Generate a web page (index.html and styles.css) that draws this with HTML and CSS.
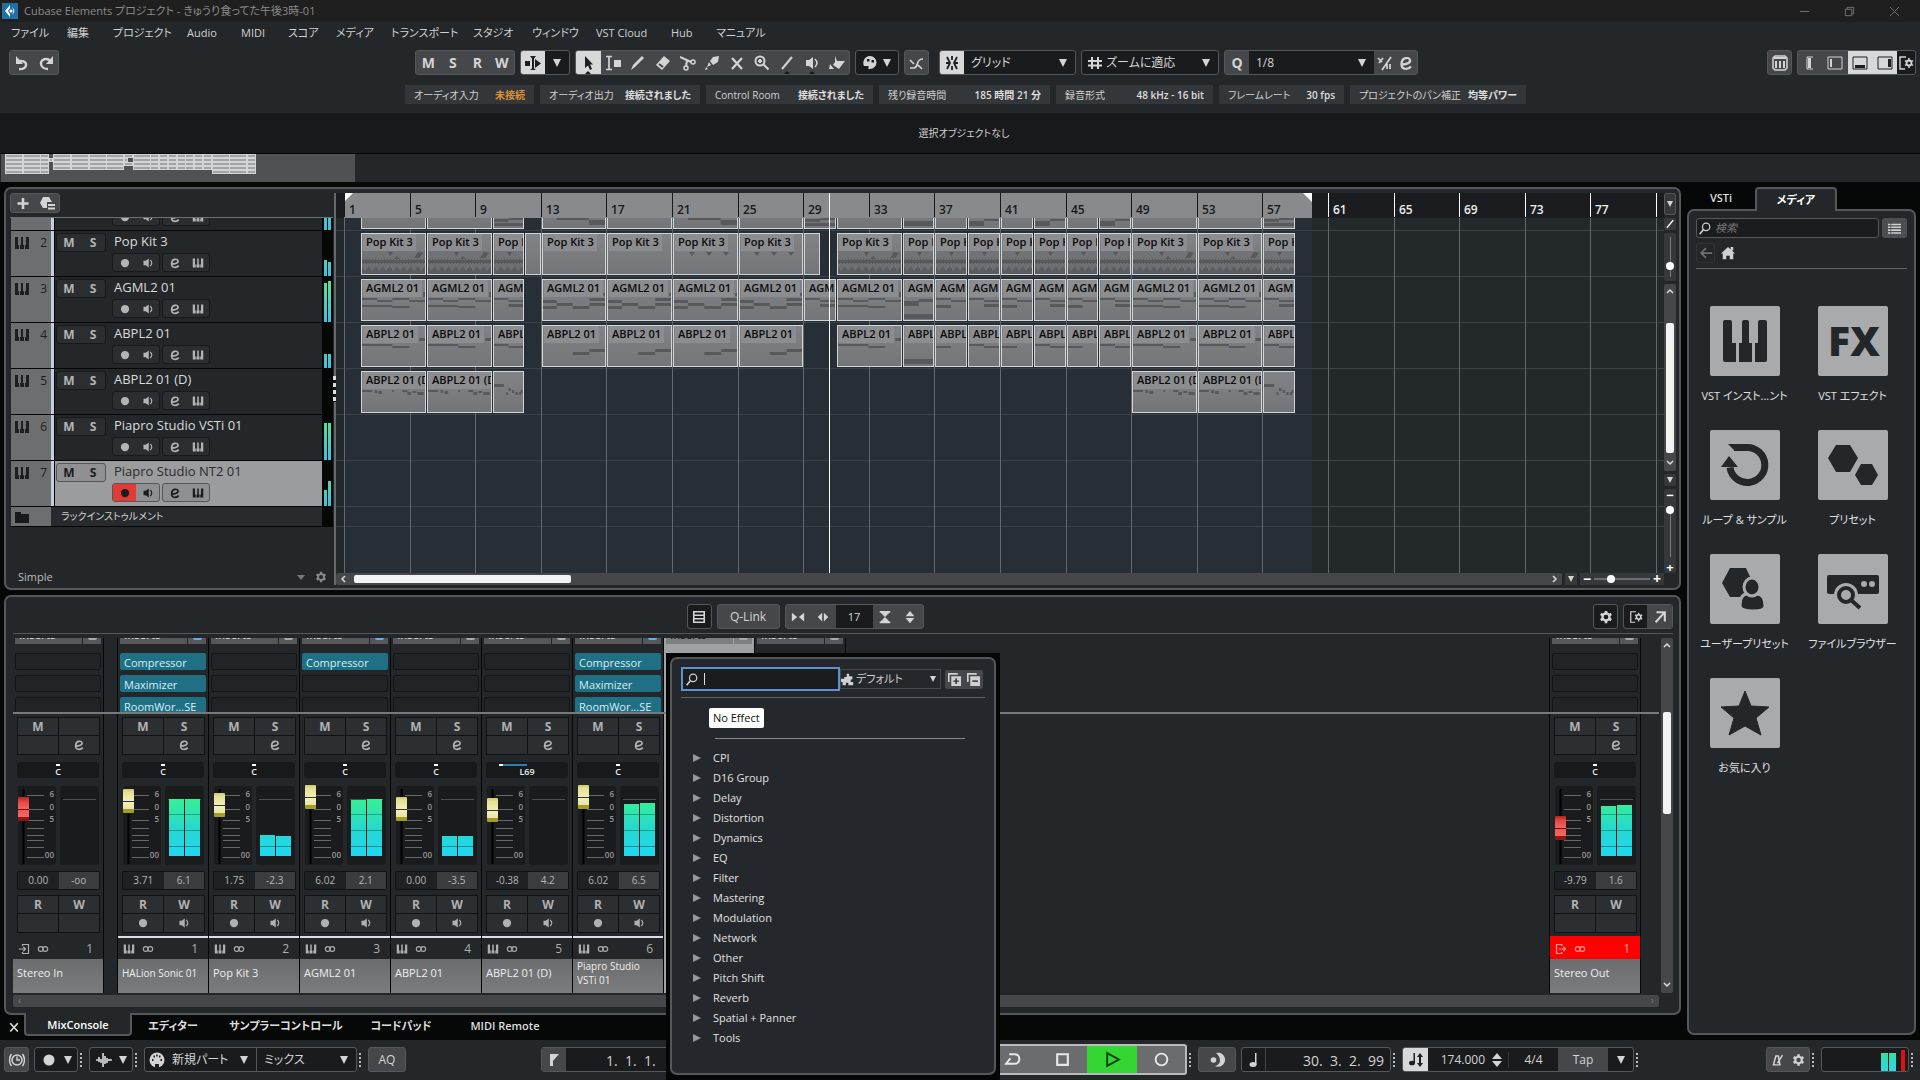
FILE: index.html
```html
<!DOCTYPE html>
<html lang="ja">
<head>
    <meta charset="utf-8">
    <meta name="viewport" content="width=device-width, initial-scale=1">
    <title>Cubase Elements プロジェクト</title>
    <link rel="stylesheet" href="styles.css">
    <script src="project.js" defer></script>
</head>
<body>
    <svg class="symbols" width="0" height="0" aria-hidden="true">
        <symbol id="undo" viewBox="0 0 16 16"><path d="M5 14c8 1 10-8 2-8H4" fill="none" stroke="currentColor" stroke-width="2.4"/><path d="M2 1v8h7z"/></symbol>
        <symbol id="redo" viewBox="0 0 16 16"><path d="M10 14c-9 0-9-10-2-10 3 0 4 1 5 3" fill="none" stroke="currentColor" stroke-width="2.4"/><path d="M15 1v8H8z"/></symbol>
        <symbol id="autoscroll" viewBox="0 0 16 16"><path d="M0 6h5v5H0zM5 1h6L9 3.500v10L11 15H5l2-1.500v-10zM10 4l6 4.500-6 4.500z"/></symbol>
        <symbol id="arrow" viewBox="0 0 16 16"><path d="M5 1v12l3-2.500 2 4.500 2-1-2-4.500h3z"/></symbol>
        <symbol id="range" viewBox="0 0 16 16"><path d="M1 1.500h6M1 14.500h6M4 2v13" fill="none" stroke="currentColor" stroke-width="1.700"/><path d="M9 5h7v7H9z"/></symbol>
        <symbol id="pencil" viewBox="0 0 16 16"><path d="M1 15l2-5 9-9 2 2-9 9z"/></symbol>
        <symbol id="eraser" viewBox="0 0 16 16"><path d="M9 1l6 5-8 9-6-5z"/><path d="M4 9l4 3" stroke="#444" stroke-width="2"/></symbol>
        <symbol id="scissors" viewBox="0 0 16 16"><path d="M0 2l11 5M7 5L6 12" fill="none" stroke="currentColor" stroke-width="2"/><circle cx="13" cy="7" r="2" fill="none" stroke="currentColor" stroke-width="1.500"/><circle cx="6" cy="13" r="2" fill="none" stroke="currentColor" stroke-width="1.500"/></symbol>
        <symbol id="glue" viewBox="0 0 16 16"><path d="M15 1l-1 6-5 3-3-4 3-4zM5 7l2 3-4 2zM2 12l2 2-3 1z"/></symbol>
        <symbol id="cross" viewBox="0 0 16 16"><path d="M3 3l10 11M13 3L3 14" stroke="currentColor" stroke-width="2.200"/></symbol>
        <symbol id="zoom" viewBox="0 0 16 16"><circle cx="6" cy="6" r="4.500" fill="none" stroke="currentColor" stroke-width="2"/><path d="M4 6h4M6 4v4M9.500 9.500l5 5" stroke="currentColor" stroke-width="2"/></symbol>
        <symbol id="line" viewBox="0 0 16 16"><path d="M3 14L13 2" stroke="currentColor" stroke-width="2"/></symbol>
        <symbol id="speaker" viewBox="0 0 16 16"><path d="M2 5h3l4-3v12l-4-3H2z"/><path d="M11 4q4 4 0 8" fill="none" stroke="currentColor" stroke-width="1.500"/></symbol>
        <symbol id="warp" viewBox="0 0 16 16"><path d="M6 1l2 5h8l-6 8-6-4 2-3zM1 9l4 5H0z"/></symbol>
        <symbol id="palette" viewBox="0 0 16 16"><path fill-rule="evenodd" d="M8 1a6.500 6.500 0 1 1 0 13H7c-2 0 1-3-1-3H2C0 8 2 1 8 1zM5 4v2.500h2.500V4zm4.500 1v2.500H12V5z"/></symbol>
        <symbol id="curve" viewBox="0 0 16 16"><path d="M1 13h4c5 0 1-9 9-9M9 10l4 4M1 5l4 4" fill="none" stroke="currentColor" stroke-width="1.700"/></symbol>
        <symbol id="snap" viewBox="0 0 16 16"><path d="M8 1v4M8 15v-4M3 2l3 6-3 6M13 2l-3 6 3 6M2 8h4M10 8h4" fill="none" stroke="currentColor" stroke-width="1.800"/></symbol>
        <symbol id="hash" viewBox="0 0 16 16"><path d="M5 2v12M11 2v12M1 6h14M1 10.500h14" stroke="currentColor" stroke-width="2"/></symbol>
        <symbol id="quant" viewBox="0 0 16 16"><path d="M1 3l4 4M6 3L2 8M14 2L5 15M10 9v5M13 9v5" fill="none" stroke="currentColor" stroke-width="1.700"/></symbol>
        <symbol id="edit" viewBox="0 0 16 16"><path d="M3 9.500c5 0 10-1.500 9-4.500-1-3-8-3-8.500 3.500C3 15 10 15 13 11.500" fill="none" stroke="currentColor" stroke-width="2.200"/></symbol>
        <symbol id="search" viewBox="0 0 16 16"><circle cx="10" cy="6" r="4.500" fill="none" stroke="currentColor" stroke-width="1.500"/><path d="M7 9l-5 6" stroke="currentColor" stroke-width="2"/></symbol>
        <symbol id="piano" viewBox="0 0 16 16"><path d="M1 2h3v8h1v4H1zM7 2h2v8h1v4H6v-4h1zM12 2h3v12h-4v-4h1z"/></symbol>
        <symbol id="keys" viewBox="0 0 16 16"><path d="M3 1h10l2 2v10l-2 2H3l-2-2V3z" fill="none" stroke="currentColor" stroke-width="1.500"/><path d="M2 2h12v2H2zM3 6h2v7H3zM7 6h2v7H7zM11 6h2v7h-2z"/></symbol>
        <symbol id="gear" viewBox="0 0 16 16"><circle cx="8" cy="8" r="4" fill="none" stroke="currentColor" stroke-width="2.600"/><path d="M8 1v3M8 12v3M2 4.500l2.500 1.500M11.500 10l2.500 1.500M14 4.500L11.500 6M4.500 10L2 11.500" stroke="currentColor" stroke-width="3"/></symbol>
        <symbol id="zonegear" viewBox="0 0 16 16"><path d="M8 2H2v12h5" fill="none" stroke="currentColor" stroke-width="1.400"/><circle cx="11" cy="8" r="2.500" fill="none" stroke="currentColor" stroke-width="1.800"/><path d="M11 3v3M11 10v3M7 5.500l2 1.500M13 9l2 1.500M15 5.500L13 7M7 10.500L9 9" stroke="currentColor" stroke-width="1.500"/></symbol>
        <symbol id="zone-a" viewBox="0 0 16 16"><path d="M11 2H5v12h6" fill="none" stroke="currentColor"/><path d="M6 3h3v10H6z"/></symbol>
        <symbol id="zone-b" viewBox="0 0 16 16"><path d="M1 2h14v12H1z" fill="none" stroke="currentColor"/><path d="M3 4h2v8H3z"/></symbol>
        <symbol id="zone-c" viewBox="0 0 16 16"><path d="M1 2h14v12H1z" fill="none" stroke="currentColor"/><path d="M3 10h10v3H3z"/></symbol>
        <symbol id="zone-d" viewBox="0 0 16 16"><path d="M1 2h14v12H1z" fill="none" stroke="currentColor"/><path d="M11 4h3v8h-3z"/></symbol>
        <symbol id="plus" viewBox="0 0 16 16"><path d="M8 3v11M2.500 8.500h11" stroke="currentColor" stroke-width="2.600"/></symbol>
        <symbol id="preset" viewBox="0 0 16 16"><path d="M4 2h6l3 5H8v6H4L1 8zM9 9h7v2H9zM9 12.500h7v2H9z"/></symbol>
        <symbol id="folder" viewBox="0 0 16 16"><path d="M1 3h6v2h8v9H1z"/></symbol>
        <symbol id="list" viewBox="0 0 16 16"><path d="M0 2h3v2H0zM4 2h12v2H4zM0 5.500h3v2H0zM4 5.500h12v2H4zM0 9h3v2H0zM4 9h12v2H4zM0 12.500h3v2H0zM4 12.500h12v2H4z"/></symbol>
        <symbol id="back" viewBox="0 0 16 16"><path d="M15 8H3M8 2.500L2.500 8 8 13.500" fill="none" stroke="currentColor" stroke-width="2"/></symbol>
        <symbol id="home" viewBox="0 0 16 16"><path d="M8 1l8 7.500h-2V15h-4v-4H6v4H2V8.500H0zM11 1h3v4h-3z"/></symbol>
        <symbol id="rows" viewBox="0 0 16 16"><path d="M2 2h12v12H2zM2 6h12M2 10h12" fill="none" stroke="currentColor" stroke-width="1.800"/></symbol>
        <symbol id="narrow" viewBox="0 0 16 16"><path d="M1 3l6 5-6 5zM15 3L9 8l6 5z"/></symbol>
        <symbol id="widen" viewBox="0 0 16 16"><path d="M7 3L2 8l5 5zM9 3l5 5-5 5z"/></symbol>
        <symbol id="shrink" viewBox="0 0 16 16"><path d="M2 1h12v2H2zM3 3h10L8 8zM8 8l5 5H3zM2 13h12v2H2z"/></symbol>
        <symbol id="grow" viewBox="0 0 16 16"><path d="M8 1l5 6H3zM8 15l5-6H3z"/></symbol>
        <symbol id="popout" viewBox="0 0 16 16"><path d="M4 2.500h9.500V13M13 3L3 14" fill="none" stroke="currentColor" stroke-width="2.400"/></symbol>
        <symbol id="link" viewBox="0 0 16 16"><circle cx="5" cy="8" r="3.200" fill="none" stroke="currentColor" stroke-width="1.500"/><circle cx="11" cy="8" r="3.200" fill="none" stroke="currentColor" stroke-width="1.500"/></symbol>
        <symbol id="input" viewBox="0 0 16 16"><path d="M6 4V2h8v12H6v-2M1 8h8M7 5l3 3-3 3" fill="none" stroke="currentColor" stroke-width="1.600"/></symbol>
        <symbol id="output" viewBox="0 0 16 16"><path d="M9 4V2H2v12h7v-2M5 8h9M11 5l3 3-3 3" fill="none" stroke="currentColor" stroke-width="1.600"/></symbol>
        <symbol id="dot" viewBox="0 0 16 16"><circle cx="8" cy="8" r="5.500"/></symbol>
        <symbol id="clock" viewBox="0 0 16 16"><circle cx="8" cy="8" r="5" fill="none" stroke="currentColor" stroke-width="1.500"/><path d="M8 4.500V8h3M2.500 2Q-1.500 8 2.500 14M13.500 2q4 6 0 12" fill="none" stroke="currentColor" stroke-width="1.400"/></symbol>
        <symbol id="wave" viewBox="0 0 16 16"><path d="M0 8h3M3 5v5M5 7v4M7 1v14M9 4v8M11 6v5M13 7v2M13 8h3" stroke="currentColor" stroke-width="1.700"/></symbol>
        <symbol id="midi" viewBox="0 0 16 16"><circle cx="8" cy="8" r="7.500"/><path d="M3 7h1.500v2H3zM11.500 7H13v2h-1.500zM4.500 3.500H6v2H4.500zM10 3.500h1.500v2H10zM7.200 2.500h1.500v2H7.200zM6 12h4v4H6z" fill="#1b1d1f"/></symbol>
        <symbol id="flag" viewBox="0 0 16 16"><path d="M4 2h9L7 9v5H4z"/></symbol>
        <symbol id="loop" viewBox="0 0 16 16"><path d="M5 3h5c6 0 6 9 0 9H2l4-5" fill="none" stroke="currentColor" stroke-width="1.800"/></symbol>
        <symbol id="stop" viewBox="0 0 16 16"><path d="M3 3h10v10H3z" fill="none" stroke="currentColor" stroke-width="2"/></symbol>
        <symbol id="play" viewBox="0 0 16 16"><path d="M3 2l11 6-11 6z" fill="none" stroke="currentColor" stroke-width="1.800"/></symbol>
        <symbol id="record" viewBox="0 0 16 16"><circle cx="8" cy="8" r="5.500" fill="none" stroke="currentColor" stroke-width="1.800"/></symbol>
        <symbol id="click" viewBox="0 0 16 16"><circle cx="4.500" cy="8" r="2.800"/><path d="M7 1a7 7 0 1 1-1 13c6-1 7-8 1-13z"/></symbol>
        <symbol id="note" viewBox="0 0 16 16"><ellipse cx="7" cy="12.500" rx="3.500" ry="2.500"/><path d="M9 1h1.500v12H9z"/></symbol>
        <symbol id="tempo" viewBox="0 0 16 16"><ellipse cx="4" cy="11" rx="3" ry="2.300"/><path d="M5.500 1H7v10H5.500zM12 1l3 4h-2v6h2l-3 4-3-4h2V5H9z"/></symbol>
        <symbol id="metronome" viewBox="0 0 16 16"><path d="M6 3h3l2 11H3zM8 12l6-10" fill="none" stroke="currentColor" stroke-width="1.800"/></symbol>
        <symbol id="plugin" viewBox="0 0 16 16"><path d="M7 1h3v3h4v4h-2v3h3v4H9v-3H6v3H2v-4H0V7h4V5h3z"/></symbol>
        <symbol id="expand" viewBox="0 0 16 16"><path d="M1 11V1h11" fill="none" stroke="currentColor" stroke-width="2"/><path d="M4 4h12v12H4z"/><path d="M10 6.500v7M6.500 10h7" stroke="#333" stroke-width="1.800"/></symbol>
        <symbol id="collapse" viewBox="0 0 16 16"><path d="M1 11V1h11" fill="none" stroke="currentColor" stroke-width="2"/><path d="M4 4h12v12H4z"/><path d="M6.500 10h7" stroke="#333" stroke-width="1.800"/></symbol>
    </svg>

    <header class="titlebar">
        <svg class="logo" viewBox="0 0 16 16"><path d="M0 0h16v16H0z" fill="#1f6fa8"/><path d="M8 2L3 8l5 6v-3L6 8l2-3z" fill="#fff"/><path d="M10 4q5 4 0 8 2-4 0-8z" fill="#fff" opacity=".7"/><circle cx="9" cy="8" r="1.500" fill="#fff"/></svg>
        <h1>Cubase Elements プロジェクト - きゅうり食ってた午後3時-01</h1>
        <div class="window-buttons">
            <button aria-label="最小化"><svg viewBox="0 0 12 12"><path d="M1 6h10"/></svg></button>
            <button aria-label="元に戻す"><svg viewBox="0 0 12 12"><path d="M1.500 3.500h7v7h-7zM3.500 3.500v-2h7v7h-2"/></svg></button>
            <button aria-label="閉じる"><svg viewBox="0 0 12 12"><path d="M1 1l10 10M11 1L1 11"/></svg></button>
        </div>
    </header>

    <nav class="menubar">
        <a href="#">ファイル</a><a href="#">編集</a><a href="#">プロジェクト</a><a href="#">Audio</a><a href="#">MIDI</a><a href="#">スコア</a><a href="#">メディア</a><a href="#">トランスポート</a><a href="#">スタジオ</a><a href="#">ウィンドウ</a><a href="#">VST Cloud</a><a href="#">Hub</a><a href="#">マニュアル</a>
    </nav>

    <section class="toolbar">
        <div class="toolbar-left">
            <div class="group">
                <button class="tool" aria-label="元に戻す"><svg class="icon"><use href="#undo"/></svg></button>
                <button class="tool" aria-label="やり直す"><svg class="icon"><use href="#redo"/></svg></button>
            </div>
        </div>
        <div class="toolbar-center">
            <div class="group letters">
                <button class="tool">M</button><button class="tool">S</button><button class="tool">R</button><button class="tool">W</button>
            </div>
            <div class="group dark autoscroll">
                <button class="tool on" aria-label="オートスクロール"><svg class="icon"><use href="#autoscroll"/></svg></button>
                <button class="tool" aria-label="オートスクロール設定"><i class="caret"></i></button>
            </div>
            <div class="group" id="tools"></div>
            <div class="group dark color-tool">
                <button class="tool" aria-label="カラー"><svg class="icon"><use href="#palette"/></svg></button>
                <i class="caret"></i>
            </div>
            <div class="group">
                <button class="tool" aria-label="ゼロクロス"><svg class="icon"><use href="#curve"/></svg></button>
            </div>
            <div class="group dark snap">
                <button class="tool on" aria-label="スナップ"><svg class="icon"><use href="#snap"/></svg></button>
                <div class="dropdown"><select aria-label="スナップタイプ"><option>グリッド</option></select></div>
            </div>
            <div class="group dark grid-type">
                <svg class="icon"><use href="#hash"/></svg>
                <div class="dropdown"><select aria-label="グリッドの種類"><option>ズームに適応</option></select></div>
            </div>
            <div class="group quantize">
                <button class="tool q">Q</button>
                <div class="dropdown"><select aria-label="クオンタイズ"><option>1/8</option></select></div>
                <button class="tool small" aria-label="反復クオンタイズ"><svg class="icon"><use href="#quant"/></svg></button>
                <button class="tool small" aria-label="クオンタイズ設定"><svg class="icon"><use href="#edit"/></svg></button>
            </div>
        </div>
        <div class="toolbar-right">
            <div class="group"><button class="tool" aria-label="キーボード"><svg class="icon"><use href="#keys"/></svg></button></div>
            <div class="group zones">
                <button class="tool" aria-label="インスペクター"><svg class="icon"><use href="#zone-a"/></svg></button>
                <button class="tool" aria-label="左ゾーン"><svg class="icon"><use href="#zone-b"/></svg></button>
                <button class="tool on" aria-label="下ゾーン"><svg class="icon"><use href="#zone-c"/></svg></button>
                <button class="tool on" aria-label="右ゾーン"><svg class="icon"><use href="#zone-d"/></svg></button>
                <button class="tool last" aria-label="レイアウト設定"><svg class="icon"><use href="#zonegear"/></svg></button>
            </div>
        </div>
    </section>

    <section class="status-line">
        <div><span>オーディオ入力</span><b class="warn">未接続</b></div>
        <div><span>オーディオ出力</span><b>接続されました</b></div>
        <div><span>Control Room</span><b>接続されました</b></div>
        <div><span>残り録音時間</span><b>185 時間 21 分</b></div>
        <div><span>録音形式</span><b>48 kHz - 16 bit</b></div>
        <div><span>フレームレート</span><b>30 fps</b></div>
        <div><span>プロジェクトのパン補正</span><b>均等パワー</b></div>
    </section>

    <section class="info-line">選択オブジェクトなし</section>
    <section class="overview"><div class="overview-range"><svg id="overview-map"></svg></div></section>

    <main class="workspace">
        <div class="left-column">
            <section class="panel project">
                <div class="track-list">
                    <div class="track-head">
                        <div class="group">
                            <button class="tool" aria-label="トラックを追加"><svg class="icon"><use href="#plus"/></svg></button>
                            <button class="tool" aria-label="トラックプリセット"><svg class="icon"><use href="#preset"/></svg></button>
                        </div>
                    </div>
                    <div class="tracks" id="tracks"></div>
                    <div class="track-foot"><span>Simple</span><i class="caret"></i><svg class="icon"><use href="#gear"/></svg></div>
                </div>
                <div class="splitter"><i></i></div>
                <div class="timeline">
                    <div class="ruler" id="ruler"></div>
                    <div class="lanes" id="lanes"></div>
                    <div class="playhead"></div>
                    <div class="hscroll-row">
                        <div class="hscroll"><svg class="chev"><path d="M7 3L4 6l3 3"/></svg><i class="thumb"></i><svg class="chev end"><path d="M4 3l3 3-3 3"/></svg></div>
                        <button class="mini" aria-label="表示倍率プリセット"><i class="caret"></i></button>
                        <div class="zoomer"><b>−</b><input type="range" aria-label="横ズーム" value="28"><b>+</b></div>
                    </div>
                </div>
                <div class="vbar">
                    <button class="vbtn tall" aria-label="ルーラー設定"><i class="caret"></i></button>
                    <button class="vbtn" aria-label="波形"><svg class="icon"><use href="#line"/></svg></button>
                    <div class="vslide wave"><i class="rail"></i><i class="knob"></i></div>
                    <div class="vscroll"><svg class="chev"><path d="M3 7l3-3 3 3"/></svg><i class="thumb"></i><svg class="chev"><path d="M3 4l3 3 3-3"/></svg></div>
                    <button class="vbtn" aria-label="縦ズームプリセット"><i class="caret"></i></button>
                    <div class="vslide size"><b>−</b><i class="rail"></i><i class="knob"></i><b>+</b></div>
                </div>
            </section>

            <section class="mixer-zone">
                <div class="panel mixer">
                    <div class="mixer-bar">
                        <div class="mixer-tools">
                            <div class="group dark"><button class="tool" aria-label="表示チャンネル"><svg class="icon"><use href="#rows"/></svg></button></div>
                            <div class="group"><button class="tool qlink">Q-Link</button></div>
                            <div class="group">
                                <button class="tool" aria-label="幅を縮小"><svg class="icon"><use href="#narrow"/></svg></button>
                                <button class="tool" aria-label="幅を拡大"><svg class="icon"><use href="#widen"/></svg></button>
                                <span class="count">17</span>
                                <button class="tool" aria-label="高さを縮小"><svg class="icon"><use href="#shrink"/></svg></button>
                                <button class="tool" aria-label="高さを拡大"><svg class="icon"><use href="#grow"/></svg></button>
                            </div>
                        </div>
                        <div class="mixer-right">
                            <div class="group dark"><button class="tool" aria-label="設定"><svg class="icon"><use href="#gear"/></svg></button></div>
                            <div class="group dark"><button class="tool" aria-label="ゾーン設定"><svg class="icon"><use href="#zonegear"/></svg></button><button class="tool mid" aria-label="別ウィンドウ"><svg class="icon"><use href="#popout"/></svg></button></div>
                        </div>
                    </div>
                    <div class="mixer-body">
                        <div class="console">
                            <div class="racks" id="racks"></div>
                            <div class="strips" id="strips"></div>
                            <div class="console-scroll"><span>‹</span><span>›</span></div>
                        </div>
                        <div class="vscroll"><svg class="chev"><path d="M3 7l3-3 3 3"/></svg><i class="thumb"></i><svg class="chev"><path d="M3 4l3 3 3-3"/></svg></div>
                    </div>
                </div>
                <nav class="zone-tabs">
                    <button class="close" aria-label="閉じる"><svg class="icon"><use href="#cross"/></svg></button>
                    <button class="tab active">MixConsole</button>
                    <button class="tab">エディター</button>
                    <button class="tab">サンプラーコントロール</button>
                    <button class="tab wide">コードパッド</button>
                    <button class="tab narrow">MIDI Remote</button>
                </nav>
            </section>
        </div>

        <aside class="media">
            <nav class="media-tabs"><button class="tab">VSTi</button><button class="tab active">メディア</button></nav>
            <div class="panel media-panel">
                <div class="media-search">
                    <label><svg class="icon"><use href="#search"/></svg><input type="text" placeholder="検索" aria-label="検索"></label>
                    <button aria-label="表示"><svg class="icon"><use href="#list"/></svg></button>
                </div>
                <div class="media-path">
                    <button class="back" aria-label="戻る"><svg class="icon"><use href="#back"/></svg></button>
                    <button aria-label="ホーム"><svg class="icon"><use href="#home"/></svg></button>
                </div>
                <div class="tiles">
                    <a href="#"><svg viewBox="0 0 70 70"><path d="M13 16q0-2 2-2h5q2 0 2 2v21h4v19H15q-2 0-2-2zM32 16q0-2 2-2h3q2 0 2 2v21h3v19H29V37h3zM48 16q0-2 2-2h5q2 0 2 2v38q0 2-2 2H45V37h3z"/></svg><span>VST インスト...ント</span></a>
                    <a href="#"><svg viewBox="0 0 70 70"><text x="36" y="50" text-anchor="middle">FX</text></svg><span>VST エフェクト</span></a>
                    <a href="#"><svg viewBox="0 0 70 70"><path d="M24 17.500h13a17.500 17.500 0 1 1-17 20" fill="none" stroke="#23272a" stroke-width="7"/><path d="M18 14h12v7h-5zM11 37l8-11 9 11z"/></svg><span>ループ &amp; サンプル</span></a>
                    <a href="#"><svg viewBox="0 0 70 70"><path d="M10 28l8-13h14l8 13-8 14H18zM37 45l6-11h11l6 11-6 10H43z"/></svg><span>プリセット</span></a>
                    <a href="#"><svg viewBox="0 0 70 70"><path d="M12 29l8-15h16l7 15-7 14H20z"/><g stroke="#a8aaab" stroke-width="3"><path d="M30 52q0-12 7-12h10q8 0 8 12 0 5-12 5t-13-5z"/><ellipse cx="42" cy="33" rx="8" ry="9"/></g></svg><span>ユーザープリセット</span></a>
                    <a href="#"><svg viewBox="0 0 70 70"><rect x="9" y="21" width="52" height="19" rx="2"/><circle cx="46" cy="30" r="3" fill="#a8aaab"/><circle cx="54" cy="30" r="3" fill="#a8aaab"/><circle cx="28" cy="41" r="12" fill="#a8aaab"/><circle cx="28" cy="41" r="7" fill="none" stroke="#23272a" stroke-width="4"/><path d="M33 46l9 8" stroke="#23272a" stroke-width="4"/></svg><span>ファイルブラウザー</span></a>
                    <a href="#"><svg viewBox="0 0 70 70"><path d="M35 13l6 15 18 1-13 11 5 17-16-9-16 9 5-17L11 29l18-1z" stroke="#23272a" stroke-linejoin="round"/></svg><span>お気に入り</span></a>
                </div>
            </div>
        </aside>
    </main>

    <footer class="transport">
        <div class="transport-left">
            <div class="group"><button class="tool" aria-label="遅延補正"><svg class="icon"><use href="#clock"/></svg></button></div>
            <div class="group dark pair"><svg class="icon"><use href="#dot"/></svg><i class="caret"></i></div><i class="grip"></i>
            <div class="group dark pair"><svg class="icon"><use href="#wave"/></svg><i class="caret"></i></div><i class="grip"></i>
            <div class="group dark midi-modes">
                <svg class="icon"><use href="#midi"/></svg>
                <div class="dropdown"><select aria-label="MIDI 録音モード"><option>新規パート</option></select></div>
                <div class="dropdown mix"><select aria-label="サイクル録音モード"><option>ミックス</option></select></div>
            </div><i class="grip"></i>
            <div class="group"><button class="tool aq">AQ</button></div>
        </div>
        <div class="transport-main">
            <div class="group dark locator"><button class="tool mid" aria-label="左ロケーター"><svg class="icon"><use href="#flag"/></svg></button><span class="time">1.&nbsp; 1.&nbsp; 1.</span></div>
            <div class="play-controls">
                <button aria-label="サイクル"><svg class="icon"><use href="#loop"/></svg></button>
                <button aria-label="停止"><svg class="icon"><use href="#stop"/></svg></button>
                <button class="playing" aria-label="再生"><svg class="icon"><use href="#play"/></svg></button>
                <button aria-label="録音"><svg class="icon"><use href="#record"/></svg></button>
            </div><i class="grip"></i>
            <div class="group preroll"><button class="tool" aria-label="プリロール"><svg class="icon"><use href="#click"/></svg></button></div>
            <div class="group dark position"><button class="tool" aria-label="時間形式"><svg class="icon"><use href="#note"/></svg></button><span class="time">30.&nbsp; 3.&nbsp; 2.&nbsp; 99</span></div><i class="grip"></i>
            <div class="group dark tempo"><button class="tool on" aria-label="テンポトラック"><svg class="icon"><use href="#tempo"/></svg></button><span class="bpm">174.000</span><svg class="icon"><use href="#grow"/></svg><span class="sig">4/4</span><button class="tool tap">Tap</button><button class="tool" aria-label="タップ設定"><i class="caret"></i></button></div><i class="grip"></i>
        </div>
        <div class="transport-right">
            <div class="group metro"><button class="tool" aria-label="メトロノーム"><svg class="icon"><use href="#metronome"/></svg></button><button class="tool" aria-label="メトロノーム設定"><svg class="icon"><use href="#gear"/></svg></button></div><i class="grip"></i>
            <div class="group dark levels"><i class="lv"></i><i class="lv"></i><i class="clip-led"></i></div><i class="grip"></i>
        </div>
    </footer>

    <!-- insert slot plug-in selector -->
    <section class="selector">
        <div class="selector-box">
            <div class="selector-bar">
                <label class="selector-search"><svg class="icon"><use href="#search"/></svg><i class="text-caret"></i><input type="text" aria-label="プラグインを検索"></label>
                <div class="collection"><svg class="icon"><use href="#plugin"/></svg><div class="dropdown"><select aria-label="コレクション"><option>デフォルト</option></select></div></div>
                <div class="tree-buttons"><button aria-label="すべて展開"><svg class="icon"><use href="#expand"/></svg></button><button aria-label="すべて折りたたむ"><svg class="icon"><use href="#collapse"/></svg></button></div>
            </div>
            <button class="no-effect">No Effect</button>
            <ul class="effects" id="effects"></ul>
        </div>
    </section>
</body>
</html>
```
FILE: styles.css
```css
:root {
    --bg: #23272a;
    --line: #55585a;
    --btn: #45474a;
    --dark: #191b1d;
    --light: #d4d4d4;
    font-family: "Open Sans", "Noto Sans CJK JP", sans-serif;
    font-size: 11px;
    font-feature-settings: "palt";
}

* {
    box-sizing: border-box;
}

body {
    margin: 0;
    height: 100vh;
    min-height: 1000px;
    display: flex;
    flex-direction: column;
    background: #060808;
    color: #cfd0d0;
    line-height: 16px;
    white-space: nowrap;
    overflow: hidden;
    position: relative;
}

button, input, select {
    font: inherit;
    font-feature-settings: inherit;
    color: inherit;
    background: none;
    border: 0;
    padding: 0;
    margin: 0;
    outline: 0;
}

a {
    color: inherit;
    text-decoration: none;
}

.symbols {
    position: absolute;
}

.icon {
    width: 16px;
    height: 16px;
    fill: currentColor;
    flex: none;
    display: block;
}

.caret {
    flex: none;
    border: 4px solid transparent;
    border-top: 8px solid #d4d4d4;
    border-bottom: 0;
}

/* shared controls */
.group {
    display: flex;
    align-items: stretch;
    height: 25px;
    border: 1px solid var(--line);
    border-radius: 3px;
    background: var(--btn);
    color: var(--light);
    overflow: hidden;
    flex: none;
}

.group.dark {
    background: var(--dark);
}

.tool {
    flex: 1;
    min-width: 23px;
    display: flex;
    align-items: center;
    justify-content: center;
    position: relative;
}

.tool.on {
    background: #d8d8d8;
    color: #1c1e20;
}

.tool.mid {
    background: var(--btn);
}

.dropdown {
    position: relative;
    flex: 1;
    display: flex;
}

.dropdown select {
    appearance: none;
    width: 100%;
    padding-left: 7px;
}

.dropdown::after {
    content: "";
    position: absolute;
    right: 8px;
    top: 8px;
    border: 4px solid transparent;
    border-top: 8px solid #d4d4d4;
    border-bottom: 0;
    pointer-events: none;
}

.panel {
    border: 2px solid var(--line);
    border-radius: 7px;
    background: var(--bg);
}

/* title and menu */
.titlebar {
    height: 22px;
    background: #1f1f1f;
    display: flex;
    align-items: center;
    padding: 0 3px 0 2px;
    flex: none;
}

.logo {
    width: 16px;
    height: 16px;
}

.titlebar h1 {
    flex: 1;
    margin: 0 0 0 6px;
    font-size: 11px;
    font-weight: normal;
    color: #8b8b8b;
}

.window-buttons {
    display: flex;
}

.window-buttons button {
    width: 45px;
    display: flex;
    justify-content: center;
}

.window-buttons svg {
    width: 11px;
    height: 11px;
    fill: none;
    stroke: #777;
}

.menubar {
    height: 28px;
    flex: none;
    display: grid;
    grid-template-columns: 56px 46px 74px 54px 47px 48px 55px 82px 59px 64px 75px 45px auto;
    padding: 3px 0 0 11px;
    background: var(--bg);
}

/* toolbar */
.toolbar {
    flex: none;
    display: flex;
    justify-content: space-between;
    height: 35px;
    padding: 0 4px 0 9px;
    background: var(--bg);
}

.toolbar-left {
    width: 57px;
    display: flex;
}

.toolbar-left .group {
    width: 50px;
}

.toolbar-center, .toolbar-right {
    display: flex;
    gap: 5px;
}

.letters, .q {
    font-weight: bold;
    font-size: 14px;
}

.letters {
    width: 100px;
}

.autoscroll {
    width: 50px;
}

#tools {
    width: 275px;
}

#tools .menu::after {
    content: "";
    position: absolute;
    bottom: 0;
    border: 3px solid transparent;
    border-bottom-color: #15171a;
    border-top: 0;
}

.color-tool {
    width: 44px;
    align-items: center;
    padding-right: 7px;
}

.snap {
    width: 137px;
    margin-left: 5px;
    font-size: 12px;
}

.snap .tool {
    flex: 0 0 24px;
}

.grid-type {
    width: 138px;
    align-items: center;
    padding-left: 5px;
    font-size: 12px;
}

.grid-type select {
    padding-left: 3px;
}

.grid-type .dropdown::after {
    top: 4px;
}

.quantize {
    width: 194px;
    font-size: 12px;
}

.quantize .q {
    flex: 0 0 24px;
}

.quantize .dropdown {
    background: var(--dark);
    flex: 0 0 125px;
}

.quantize .small {
    min-width: 0;
}

.zones {
    width: 119px;
}

.zones .last {
    flex: 0 0 18px;
    min-width: 0;
    background: var(--dark);
}

.toolbar-right .group:first-child {
    width: 25px;
}

/* status */
.status-line {
    flex: none;
    height: 28px;
    display: grid;
    grid-template-columns: 129px 160px 167px 171px 157px 125px 176px;
    justify-content: center;
    gap: 6px;
    padding-left: 11px;
    background: var(--bg);
}

.status-line div {
    height: 19px;
    display: flex;
    justify-content: space-between;
    align-items: center;
    padding: 0 9px;
    background: #34373a;
    font-size: 10px;
}

.status-line b {
    font-weight: 600;
    color: #dedede;
}

.status-line .warn {
    color: #dc9038;
}

.info-line {
    flex: none;
    height: 41px;
    background: #17191b;
    border-bottom: 1px solid #050505;
    display: flex;
    align-items: center;
    justify-content: center;
    font-size: 10px;
    padding-left: 8px;
}

.overview {
    flex: none;
    height: 28px;
    background: var(--bg);
    padding-left: 1px;
}

.overview-range {
    width: 354px;
    height: 28px;
    background: #505153;
}

.overview-range svg {
    display: block;
    width: 354px;
    height: 28px;
}

/* workspace */
.workspace {
    flex: 1;
    min-height: 0;
    display: grid;
    grid-template-columns: minmax(0, 1fr) 229px;
    gap: 6px;
    padding: 5px 4px;
}

.left-column {
    display: flex;
    flex-direction: column;
    gap: 5px;
    min-height: 0;
}

.project {
    flex: 1;
    min-height: 0;
    display: flex;
    padding: 4px 3px 3px 4px;
}

.track-list {
    width: 323px;
    flex: none;
    display: flex;
    flex-direction: column;
}

.track-head {
    height: 25px;
    border-bottom: 1px solid #6d7072;
}

.track-head .group {
    width: 50px;
    height: 20px;
}

.tracks {
    flex: 1;
    min-height: 0;
    overflow: hidden;
    padding-left: 1px;
}

.track {
    height: 46px;
    display: grid;
    grid-template-columns: 40px 3px 1fr 11px;
    border-bottom: 1px solid #060606;
}

.track:first-child {
    margin-top: -33px;
}

.track-id {
    background: #6d6e70;
    color: #1d1f21;
    display: flex;
    justify-content: space-between;
    align-items: flex-start;
    padding: 4px 4px 0 3px;
    font-size: 12px;
}

.track-color {
    background: #c3cfdd;
}

.track-body {
    border-left: 1px solid #060606;
    display: grid;
    grid-template-columns: 56px 1fr;
    grid-template-rows: 19px 19px;
    gap: 1px 0;
    padding: 2px 0 0 1px;
}

.ms, .pair-box {
    display: flex;
    align-items: center;
    border: 1px solid #17191b;
    border-radius: 3px;
    background: #2b2e31;
    color: #b3b4b4;
    font-weight: bold;
    font-size: 12px;
    height: 19px;
}

.ms {
    width: 50px;
}

.ms button {
    flex: 1;
}

.track-name {
    font-size: 13px;
    color: #dadbdb;
    padding-left: 2px;
    line-height: 17px;
}

.track-buttons {
    grid-column: 2;
    display: flex;
    gap: 2px;
}

.pair-box {
    width: 48px;
}

.pair-box button {
    height: 17px;
    flex: 1;
    display: flex;
    align-items: center;
    justify-content: center;
}

.pair-box .icon {
    width: 12px;
    height: 12px;
}

.track.selected .track-body {
    background: #9b9c9e;
    color: #1a1a1a;
}

.selected .ms, .selected .pair-box {
    background: #8f9092;
    border-color: #55575a;
    color: #1a1c1e;
}

.selected .track-name {
    color: #2b2b2b;
}

.selected .armed {
    background: #e23a34;
}

.track-meter {
    background: #060808;
    display: flex;
    align-items: flex-end;
    justify-content: center;
    gap: 1px;
}

.track-meter i {
    width: 3px;
    background: linear-gradient(to top, #45bddd, #5adf95 40px);
}

.track-folder {
    height: 20px;
    display: flex;
    border-bottom: 1px solid #060606;
    padding-right: 11px;
    background: linear-gradient(to left, #060808 11px, #282b2e 11px);
    font-size: 10px;
    line-height: 19px;
}

.track-folder div {
    width: 40px;
    background: #6d6e70;
    color: #17191b;
    padding: 2px 3px;
    margin-right: 10px;
}

.track-foot {
    height: 16px;
    display: flex;
    align-items: center;
    padding: 0 6px 0 8px;
    gap: 10px;
    color: #bbb;
}

.track-foot span {
    flex: 1;
}

.track-foot .caret {
    border-top: 5px solid #777;
}

.track-foot .icon {
    width: 12px;
    height: 12px;
    color: #888;
}

.splitter {
    width: 3px;
    border-right: 2px solid #66696b;
    display: flex;
    align-items: center;
}

.splitter i {
    width: 3px;
    height: 26px;
    background: repeating-linear-gradient(#ddd 0 4px, #111 4px 7px);
    flex: none;
}

/* timeline */
.timeline {
    flex: 1;
    min-width: 0;
    display: flex;
    flex-direction: column;
    position: relative;
}

.ruler {
    height: 25px;
    position: relative;
    overflow: hidden;
    background: #1a1c1f;
}

.cycle {
    position: absolute;
    top: 0;
    bottom: 0;
    background: #898a8d;
}

.cycle::before, .cycle::after {
    content: "";
    position: absolute;
    top: 0;
    left: 0;
    border: 9px solid transparent;
    border-top-color: #fff;
    border-left: 0;
    border-bottom: 0;
}

.cycle::after {
    left: auto;
    right: 0;
    border-right: 0;
    border-left: 9px solid transparent;
}

.bar-mark {
    position: absolute;
    top: 0;
    bottom: 1px;
    border-left: 1px solid #fff;
    padding: 9px 0 0 4px;
    font-size: 12px;
    font-weight: 600;
    color: #eee;
}

.bar-mark.in {
    border-color: #17191b;
    color: #17191b;
}

.lanes {
    flex: 1;
    min-height: 0;
    position: relative;
    overflow: hidden;
    background: #23282b;
}

.cycle-area {
    position: absolute;
    top: 0;
    bottom: 0;
    background: #272e36;
}

.bar-line {
    position: absolute;
    top: 0;
    bottom: 0;
    width: 1px;
    background: #62686e;
}

.lane-line {
    position: absolute;
    left: 0;
    right: 0;
    height: 1px;
    background: #3b4147;
}

.clip {
    position: absolute;
    height: 42px;
    border: 1px solid #d2d5d8;
    background: linear-gradient(#828386, #747578);
    overflow: hidden;
    color: #0a0a0a;
}

.clip span {
    position: absolute;
    left: 1px;
    top: 0;
    height: 17px;
    padding: 0 3px;
    background: #8c8d90;
    font-size: 11px;
    font-weight: 600;
}

.clip svg {
    display: block;
    width: 100%;
    height: 40px;
    fill: #57595c;
}

.playhead {
    position: absolute;
    left: 493px;
    top: 0;
    bottom: 12px;
    width: 1px;
    background: #fff;
}

.hscroll-row {
    display: flex;
    height: 12px;
    gap: 3px;
}

.hscroll {
    flex: 1;
    display: flex;
    align-items: center;
    background: #45474a;
    border-radius: 2px;
    padding: 0 1px 0 2px;
}

.hscroll .thumb {
    width: 217px;
    height: 8px;
    margin-left: 4px;
    background: #f2f4f4;
    border-radius: 2px;
}

.chev {
    width: 12px;
    height: 12px;
    fill: none;
    stroke: #ddd;
    stroke-width: 1.5;
    flex: none;
}

.chev.end {
    margin-left: auto;
}

.mini {
    width: 12px;
    background: #36393b;
    display: flex;
    align-items: center;
    justify-content: center;
}

.mini .caret, .vbtn .caret {
    border-width: 6px 3px 0;
}

.zoomer {
    width: 84px;
    display: flex;
    align-items: center;
    background: #36393b;
    color: #fff;
    font-size: 14px;
}

.zoomer b {
    width: 14px;
    text-align: center;
    line-height: 12px;
}

.zoomer input {
    flex: 1;
    min-width: 0;
    height: 10px;
    appearance: none;
    background: linear-gradient(#6b6e70, #6b6e70) center / 100% 2px no-repeat;
}

.zoomer input::-webkit-slider-thumb {
    appearance: none;
    width: 8px;
    height: 8px;
    border-radius: 50%;
    background: #fff;
}

.vbar {
    width: 12px;
    flex: none;
    display: flex;
    flex-direction: column;
    gap: 3px;
    padding-bottom: 12px;
}

.vbtn {
    height: 12px;
    flex: none;
    background: #36393b;
    border-radius: 2px;
    display: flex;
    align-items: center;
    justify-content: center;
}

.vbtn.tall {
    height: 22px;
    border: 1px solid #55585a;
}

.vbtn .icon {
    width: 10px;
    height: 10px;
    color: #fff;
}

.vslide {
    position: relative;
    flex: none;
    background: #36393b;
    border-radius: 2px;
    display: flex;
    flex-direction: column;
    align-items: center;
    color: #fff;
    font-size: 13px;
    line-height: 12px;
}

.vslide .rail {
    width: 1px;
    flex: 1;
    margin: 4px 0;
    background: #77797c;
}

.vslide .knob {
    position: absolute;
    width: 8px;
    height: 8px;
    border-radius: 50%;
    background: #fff;
}

.wave {
    height: 48px;
}

.wave .knob {
    top: 29px;
}

.size {
    height: 84px;
}

.size .knob {
    top: 17px;
}

.vscroll {
    flex: 1;
    width: 12px;
    display: flex;
    flex-direction: column;
    align-items: center;
    background: #45474a;
    border-radius: 2px;
    padding: 2px 0;
}

.vscroll .thumb {
    width: 8px;
    background: #f2f4f4;
    border-radius: 2px;
    margin: auto;
}

.project .vscroll .thumb {
    height: 130px;
    margin: 25px 0 auto;
}

/* mixer */
.mixer-zone {
    flex: none;
}

.mixer {
    padding: 0 6px 6px 7px;
}

.mixer-bar {
    height: 37px;
    padding-top: 7px;
    border-bottom: 1px solid var(--line);
    display: flex;
    position: relative;
    justify-content: center;
}

.mixer-tools {
    display: flex;
    gap: 5px;
    margin-right: 76px;
}

.mixer-tools .group:first-child {
    width: 25px;
}

.qlink {
    width: 61px;
    font-size: 12px;
}

.mixer-tools .tool {
    min-width: 25px;
}

.mixer-tools .group:first-child .tool {
    min-width: 0;
}

.mixer-tools .icon, .mixer-right .icon {
    width: 14px;
    height: 14px;
}

.count {
    width: 37px;
    background: var(--dark);
    text-align: center;
    line-height: 23px;
}

.mixer-right {
    position: absolute;
    right: 0;
    top: 7px;
    display: flex;
    gap: 5px;
}

.mixer-right .mid {
    min-width: 25px;
}

.mixer-body {
    display: flex;
    gap: 2px;
    margin-top: 4px;
}

.console {
    flex: 1;
    min-width: 0;
}

.mixer-body .vscroll {
    margin-bottom: 14px;
    flex: none;
}

.mixer-body .vscroll .thumb {
    height: 102px;
    margin: 60px 0 auto;
}

.racks, .strips {
    display: flex;
}

.racks {
    height: 76px;
    overflow: hidden;
    border-bottom: 2px solid #77797b;
}

.rack, .strip {
    width: 91px;
    flex: none;
    border-right: 1px solid #060606;
}

.input-channel {
    margin-right: 14px;
}

.output-channel {
    width: 92px;
    margin-left: auto;
    margin-right: 18px;
    border-left: 1px solid #060606;
}

.rack.input-channel + .rack, .strip.input-channel + .strip {
    box-shadow: -1px 0 #060606;
}

.rack {
    padding: 0 2px;
}

.rack-head {
    display: flex;
    height: 17px;
    margin: -11px 0 9px;
    gap: 1px;
    font-weight: 600;
    line-height: 15px;
}

.rack-head span {
    flex: 1;
    background: #55575a;
    padding-left: 4px;
}

.rack-head i {
    width: 18px;
    background: #55575a;
    display: flex;
    align-items: flex-end;
    justify-content: center;
    padding-bottom: 4px;
}

.rack-head i::after {
    content: "";
    width: 9px;
    height: 6px;
    background: #aaa;
    border-radius: 2px;
}

.rack-head.used i::after {
    background: #5fb4e2;
}

.selected .rack-head span, .selected .rack-head i {
    background: #7d7e80;
    color: #222;
}

.slot {
    height: 17px;
    margin-bottom: 5px;
    border: 1px solid #131517;
    border-radius: 2px;
    background: #212426;
    width: 100%;
    display: block;
    text-align: left;
    padding-left: 3px;
    line-height: 17px;
    color: #d5eef5;
}

.slot.used {
    background: #207085;
    border-color: #207085;
}

.rack.selected, .strip.selected {
    background: #a0a1a3;
}

.strip {
    padding-top: 3px;
}

.cells {
    display: grid;
    grid-template-columns: 1fr 1fr;
    grid-template-rows: 17px 18px;
    gap: 1px;
    height: 38px;
    margin: 0 3px 0 4px;
    background: #101214;
    border: 1px solid #101214;
    color: #b0b1b1;
    font-size: 12px;
    font-weight: bold;
}

.cells button {
    background: #2c2f32;
    display: flex;
    align-items: center;
    justify-content: center;
    min-width: 0;
}

.cells .icon {
    width: 12px;
    height: 12px;
}

.pan {
    height: 16px;
    margin: 7px 4px 8px;
    background: #17191b;
    border-radius: 3px;
    text-align: center;
    position: relative;
    color: #eee;
    font-size: 9px;
    font-weight: 600;
    line-height: 20px;
}

.pan::before {
    content: "";
    position: absolute;
    left: 50%;
    top: 2px;
    width: 4px;
    height: 2px;
    margin-left: -2px;
    background: #fff;
}

.pan.left::before {
    left: 15px;
    width: 28px;
    background: linear-gradient(to right, #fff 4px, #2e7fae 4px);
}

.fader-row {
    display: grid;
    grid-template-columns: 38px 39px;
    justify-content: space-between;
    height: 79px;
    margin: 0 4px 0 5px;
}

.fader, .meter {
    position: relative;
    background: #191b1c;
    border-radius: 3px;
}

.fader svg {
    display: block;
    width: 38px;
    height: 79px;
    stroke: #66696b;
    font-size: 8px;
    font-weight: 600;
}

.fader text {
    fill: #999;
    stroke: none;
    text-anchor: end;
}

.fader .knob {
    position: absolute;
    left: 0;
    width: 11px;
    height: 24px;
    border-radius: 1px;
    background: linear-gradient(#cfc860, #e4e097 3px, #f2eeb4 12px, #333 12px, #333 13px, #f2efbd 13px, #e8e5a5 20px, #a49d26 20px);
}

.fader .knob.red {
    background: linear-gradient(#b3201c, #e04540 4px, #f26660 12px, #700 12px, #700 13px, #ee5a55 13px, #ee6a66 20px, #8d1713 20px);
}

.meter {
    display: flex;
    align-items: flex-end;
    justify-content: center;
    gap: 1px;
    padding-bottom: 9px;
}

.meter::before {
    content: "";
    position: absolute;
    left: 3px;
    right: 3px;
    top: 13px;
    height: 1px;
    background: #4c4f51;
}

.meter i {
    width: 15px;
    position: relative;
    background: linear-gradient(to top, transparent 9px, #1b8c93 9px 10px, transparent 10px 25px, #1c9a87 25px 26px, transparent 26px 41px, #22a47c 41px 42px, transparent 42px), linear-gradient(to top, #1fd8f0, #26d8ce 28px, #35ee9a 54px);
}

.values {
    display: grid;
    grid-template-columns: 1fr 1fr;
    height: 19px;
    margin: 6px 3px 5px 4px;
    border: 1px solid #101214;
    border-radius: 2px;
    background: #1f2224;
    text-align: center;
    font-size: 10px;
    color: #b5b6b6;
}

.values span + span {
    background: #3a3d40;
}

.channel-line {
    height: 2px;
    margin-top: 3px;
}

.channel-line.lit {
    background: #dcdde8;
}

.channel-info {
    height: 21px;
    display: flex;
    align-items: center;
    gap: 7px;
    padding: 0 10px 0 5px;
    font-size: 12px;
    color: #adaeae;
}

.channel-info .icon {
    width: 12px;
    height: 12px;
}

.channel-info span {
    margin-left: auto;
}

.channel-name {
    height: 34px;
    display: flex;
    align-items: center;
    padding: 0 0 6px 4px;
    background: linear-gradient(#6b6c6e, #7b7c7e);
    color: #eee;
    font-size: 11px;
    line-height: 14px;
    white-space: pre;
}

.channel-name.small {
    font-size: 10px;
}

.output-channel .channel-line, .output-channel .channel-info {
    background: #f00;
    color: #ff9d9d;
}

.console-scroll {
    height: 12px;
    margin-top: 2px;
    background: #45474a;
    border-radius: 2px;
    display: flex;
    justify-content: space-between;
    padding: 0 5px;
    line-height: 10px;
    color: #777;
}

.zone-tabs {
    display: flex;
    align-items: flex-start;
    height: 20px;
    font-weight: 600;
    line-height: 22px;
    color: #ddd;
}

.zone-tabs .close {
    width: 20px;
}

.zone-tabs .close .icon {
    width: 12px;
    height: 14px;
    margin: 5px 0 0 4px;
}

.zone-tabs .tab {
    width: 112px;
}

.zone-tabs .wide {
    width: 120px;
}

.zone-tabs .narrow {
    width: 88px;
}

.zone-tabs .active, .media-tabs .active {
    background: var(--bg);
    border: 2px solid var(--line);
    color: #fff;
    position: relative;
}

.zone-tabs .active {
    height: 23px;
    width: 108px;
    margin: -2px -15px 0 0;
    padding-top: 1px;
    border-top: 0;
    border-radius: 0 0 4px 4px;
}

/* media bay */
.media {
    display: flex;
    flex-direction: column;
    min-height: 0;
}

.media-tabs {
    display: flex;
    height: 22px;
    flex: none;
    font-weight: 600;
    color: #ddd;
}

.media-tabs .tab {
    width: 68px;
}

.media-tabs .active {
    width: 82px;
    height: 24px;
    border-bottom: 0;
    border-radius: 4px 4px 0 0;
}

.media-panel {
    flex: 1;
    padding: 7px;
}

.media-search {
    display: flex;
    gap: 3px;
}

.media-search label {
    flex: 1;
    min-width: 0;
    height: 20px;
    display: flex;
    align-items: center;
    gap: 4px;
    padding-left: 1px;
    border: 1px solid var(--line);
    border-radius: 3px;
    background: #1a1c1e;
}

.media-search input {
    min-width: 0;
    width: 100%;
    font-style: italic;
}

.media-search .icon {
    width: 13px;
    height: 13px;
}

.media-search button {
    width: 25px;
    border-radius: 3px;
    background: #4c4f51;
    display: flex;
    align-items: center;
    justify-content: center;
}

.media-path {
    display: flex;
    gap: 3px;
    padding: 5px 0 5px;
    border-bottom: 1px solid #5d6b70;
}

.media-path button {
    height: 20px;
    width: 19px;
    display: flex;
    align-items: center;
    justify-content: center;
}

.media-path .back {
    border: 1px solid #2f3335;
    border-radius: 2px;
    color: #6d6f70;
}

.media-path .icon {
    width: 14px;
    height: 14px;
}

.tiles {
    display: grid;
    grid-template-columns: 108px 108px;
    grid-auto-rows: 124px;
    justify-content: center;
    padding: 37px 6px 0 0;
    color: #e0e0e0;
    text-align: center;
}

.tiles svg {
    display: block;
    width: 70px;
    height: 70px;
    margin: 0 auto 12px;
    border-radius: 2px;
    background: #a8aaab;
    fill: #23272a;
}

.tiles text {
    font-size: 41px;
    font-weight: 800;
}

/* transport */
.transport {
    flex: none;
    height: 40px;
    display: grid;
    grid-template-columns: 537px 1fr auto;
    align-items: start;
    padding: 7px 6px 0 4px;
    background: var(--bg);
    font-size: 12px;
}

.transport-left, .transport-main, .transport-right {
    display: flex;
    align-items: center;
    height: 25px;
}

.transport-left .group {
    margin-right: 5px;
}

.transport-left .group:has(+ .grip) {
    margin-right: 0;
}

.grip {
    width: 5px;
    height: 14px;
    margin-right: 6px;
    flex: none;
    background: repeating-linear-gradient(#bbb 0 2px, transparent 2px 4px) 2px 0 / 2px 100% no-repeat;
}

.pair {
    width: 44px;
    align-items: center;
    justify-content: center;
    gap: 7px;
}

.midi-modes {
    width: 213px;
    padding-left: 4px;
    align-items: center;
}

.midi-modes .dropdown {
    height: 23px;
}

.midi-modes .mix {
    border-left: 1px solid var(--line);
    flex: 0 0 100px;
}

.aq {
    width: 36px;
}

.locator {
    width: 300px;
}

.locator .tool {
    flex: 0 0 24px;
}

.locator .time {
    padding-left: 40px;
}

.time {
    font-size: 14px;
    line-height: 25px;
}

.play-controls {
    display: flex;
    height: 31px;
    width: 202px;
    margin-left: 144px;
    border: 2px solid #b9babb;
    border-radius: 3px;
    background: #6b6c6e;
    color: #e8e8e8;
}

.play-controls button {
    flex: 0 0 50px;
    display: flex;
    align-items: center;
    justify-content: center;
}

.play-controls button:last-child {
    flex: 1;
}

.play-controls .playing {
    background: #33d633;
    color: #123c12;
}

.play-controls .icon {
    width: 17px;
    height: 17px;
}

.preroll {
    width: 38px;
    margin-right: 5px;
}

.position {
    width: 150px;
    justify-content: space-between;
    padding-right: 6px;
}

.position .tool {
    flex: 0 0 24px;
    border-right: 1px solid #444;
}

.tempo {
    width: 232px;
    align-items: center;
}

.tempo .tool {
    height: 23px;
    flex: 0 0 25px;
}

.tempo .tap {
    flex: 0 0 50px;
    background: var(--btn);
}

.bpm {
    flex: 1;
    text-align: right;
    padding-right: 4px;
}

.sig {
    width: 50px;
    margin-left: 3px;
    border-left: 1px solid #333;
    text-align: center;
}

.metro {
    width: 44px;
}

.metro .tool {
    min-width: 0;
}

.metro .icon {
    width: 13px;
}

.levels {
    width: 88px;
    justify-content: flex-end;
    align-items: flex-end;
    gap: 1px;
    padding-right: 3px;
    background: linear-gradient(to right, var(--dark) 25px, #35383a 25px, #35383a 26px, var(--dark) 26px);
}

.lv {
    width: 7px;
    height: 18px;
    background: linear-gradient(to top, #2fd3e8, #35e0a0);
}

.clip-led {
    width: 4px;
    height: 21px;
    margin-left: 4px;
    background: #e01010;
}

.transport-right .grip:last-child {
    margin: 0;
}

/* plug-in selector floats over mixer and transport */
.selector {
    position: absolute;
    left: 666px;
    top: 653px;
    bottom: 0;
    width: 334px;
    padding: 4px;
    background: #050606;
}

.selector-box {
    height: calc(100% - 1px);
    border: 2px solid var(--line);
    border-radius: 7px;
    background: #24272b;
    padding: 9px;
}

.selector-bar {
    display: flex;
    align-items: center;
    height: 30px;
    padding: 0 2px 7px 0;
    border-bottom: 1px solid #606365;
}

.selector-search {
    width: 159px;
    height: 24px;
    flex: none;
    display: flex;
    align-items: center;
    gap: 6px;
    padding-left: 2px;
    border: 2px solid #5d93cc;
    background: #1a1c1e;
}

.selector-search input {
    width: 100px;
}

.text-caret {
    width: 1px;
    height: 12px;
    background: #ddd;
}

.selector .icon {
    width: 13px;
    height: 13px;
}

.collection {
    flex: 1;
    display: flex;
    align-items: center;
    height: 20px;
    border: 1px solid #45484b;
    margin-right: 4px;
}

.collection select {
    padding-left: 2px;
}

.collection .dropdown::after {
    right: 4px;
    top: 5px;
    border-width: 6px 3px 0;
}

.tree-buttons {
    width: 38px;
    height: 19px;
    display: flex;
    justify-content: space-around;
    align-items: center;
    background: #45474a;
    border-radius: 2px;
}

.no-effect {
    display: block;
    margin: 10px 0 0 28px;
    height: 20px;
    padding: 0 4px;
    border-radius: 2px;
    background: #fff;
    color: #111;
}

.effects {
    list-style: none;
    margin: 10px 20px 0 34px;
    padding: 9px 0 0;
    border-top: 1px solid #888a8c;
    color: #e2e2e2;
}

.effects li {
    height: 20px;
    margin-left: -22px;
    display: flex;
    align-items: center;
    gap: 12px;
}

.effects li::before {
    content: "";
    border: 4px solid transparent;
    border-left: 8px solid #95979a;
    border-right: 0;
}
```
FILE: project.js
```js
const BAR = 16.4;
const ORIGIN = 8;
const LANE = 46;
const barX = bar => Math.round(ORIGIN + (bar - 1) * BAR);
const icon = name => `<svg class="icon"><use href="#${name}"/></svg>`;
const byId = id => document.getElementById(id);

const tools = ['arrow', 'range', 'pencil', 'eraser', 'scissors', 'glue', 'cross', 'zoom', 'line', 'speaker', 'warp'];
byId('tools').innerHTML = tools.map(t =>
    `<button class="tool ${t === 'arrow' ? 'on' : ''} ${['arrow', 'line', 'speaker'].includes(t) ? 'menu' : ''}" aria-label="${t}">${icon(t)}</button>`).join('');

// tracks, the first one is scrolled up so that only its button row is left
const tracks = [
    { name: '', meter: [44, 44] },
    { name: 'Pop Kit 3', meter: [16, 14] },
    { name: 'AGML2 01', meter: [39, 41] },
    { name: 'ABPL2 01', meter: [14, 14] },
    { name: 'ABPL2 01 (D)', meter: [0, 0] },
    { name: 'Piapro Studio VSTi 01', meter: [37, 37] },
    { name: 'Piapro Studio NT2 01', meter: [16, 25], selected: true }
];

byId('tracks').innerHTML = tracks.map((t, i) => `
    <div class="track ${t.selected ? 'selected' : ''}">
        <div class="track-id">${icon('piano')}<span>${t.name ? i + 1 : ''}</span></div>
        <div class="track-color"></div>
        <div class="track-body">
            <div class="ms">${t.name ? '<button>M</button><button>S</button>' : ''}</div>
            <div class="track-name">${t.name}</div>
            <div class="track-buttons">
                <div class="pair-box"><button class="${t.selected ? 'armed' : ''}" aria-label="録音可能">${icon('dot')}</button><button aria-label="モニター">${icon('speaker')}</button></div>
                <div class="pair-box"><button aria-label="編集">${icon('edit')}</button><button aria-label="インストゥルメント">${icon('piano')}</button></div>
            </div>
        </div>
        <div class="track-meter">${t.meter.map(h => `<i style="height:${h}px"></i>`).join('')}</div>
    </div>`).join('') +
    `<div class="track-folder"><div>${icon('folder')}</div>ラックインストゥルメント</div>`;

// ruler and grid
const marks = [];
for (let bar = 1; bar <= 81; bar += 4) marks.push(bar);
const cycle = `left:${barX(1)}px;width:${barX(60) - barX(1)}px`;

byId('ruler').innerHTML = `<div class="cycle" style="${cycle}"></div>` + marks.map(bar =>
    `<div class="bar-mark ${bar < 60 ? 'in' : ''}" style="left:${barX(bar)}px">${bar > 77 ? '' : bar}</div>`).join('');

// note rows: [start, top, width, height], start and width in percent of the clip
const notes = {
    keysLong: [[0, 18, 24, 2], [24, 20, 24, 2], [48, 18, 27, 2], [75, 20, 25, 2], [0, 25, 48, 2], [48, 26, 27, 2], [97, 12, 3, 5]],
    keysVerse: [[0, 20, 22, 3], [0, 26, 22, 3], [22, 23, 26, 3], [48, 26, 27, 3], [75, 18, 25, 3], [75, 23, 25, 3], [97, 13, 3, 3]],
    keysA: [[0, 18, 50, 2], [50, 20, 50, 2], [0, 25, 50, 3]],
    keysB: [[0, 18, 50, 2], [50, 20, 50, 2], [50, 24, 50, 3]],
    keysFill: [[0, 21, 50, 5], [50, 19, 50, 3], [0, 34, 100, 5]],
    bassLong: [[0, 18, 48, 2], [48, 20, 27, 2], [91, 12, 9, 3]],
    bassVerse: [[48, 26, 27, 3], [75, 23, 25, 3]],
    bassA: [[0, 20, 50, 2]],
    bassB: [[0, 18, 50, 2], [50, 20, 50, 2]],
    bassFill: [[0, 33, 100, 5]],
    halionVerse: [[22, 30, 52, 2], [74, 32, 26, 5]],
    halionShort: [[0, 33, 50, 5], [50, 31, 50, 2]],
    halionEnd: [[0, 31, 50, 3], [50, 30, 50, 2], [0, 35, 100, 3]],
    fills: [[0, 18, 16, 2], [20, 18, 4, 3], [26, 19, 6, 3], [48, 18, 3, 2], [64, 18, 8, 2], [72, 20, 6, 3], [80, 19, 6, 2], [88, 20, 10, 3]],
    fillsEnd: [[0, 12, 34, 3], [42, 20, 6, 3], [50, 16, 8, 3], [62, 18, 8, 3], [74, 20, 8, 3], [86, 20, 8, 3], [92, 18, 6, 3]]
};

function drawNotes(kind, width) {
    if (kind === 'drums') {
        let out = `<rect y="17" width="${width}" height="22" opacity=".25"/><rect y="26" width="${width}" height="3"/>`;
        for (let x = 1; x < width; x += 3) {
            out += `<rect x="${x}" y="25" width="1" height="5"/>`;
        }
        for (let x = 0; x < width; x += 7) {
            out += `<path d="M${x} 40v-8l3 5 4-5v8z" opacity=".8"/>`;
        }
        if (width > 50) {
            out += `<path d="M${width - 14} 24l4-6 5 1-4 5zM${width - 34} 25l3-3 3 3z"/>`;
        }
        return out + `<path d="M${Math.round(width * 0.4)} 18h5l-2.500 4z"/>`;
    }
    if (kind === 'drumFills') {
        return [0.22, 0.48, 0.74].map(p => `<path d="M${Math.round(width * p)} 18h6l-3 4z"/>`).join('');
    }
    return (notes[kind] || []).map(([x, y, w, h]) =>
        `<rect x="${x}%" y="${y}" width="${w}%" height="${h}"/>`).join('');
}

const shortBars = [37, 39, 41, 43, 45, 47];
const arrange = (long, verse, a, b, fill, end = b) => [
    [2, 6, long], [6, 10, long], [10, 12, end],
    [13, 17, verse], [17, 21, verse], [21, 25, verse], [25, 29, verse],
    [31, 35, long], [35, 37, fill],
    ...shortBars.map((s, i) => [s, s + 2, i % 2 ? b : a]),
    [49, 53, long], [53, 57, long], [57, 59, end]
];

const drums = arrange('drums', '', 'drums', 'drums', 'drums')
    .map(c => c[0] === 21 || c[0] === 25 ? [c[0], c[1], 'drumFills'] : c);
const halion = arrange('', '', '', 'halionShort', 'bassFill', 'halionEnd')
    .map(c => c[0] === 13 || c[0] === 21 ? [c[0], c[1], 'halionVerse'] : c);

const clips = [
    [...halion, [29, 31, 'halionEnd']],
    [...drums, [12, 13, '', true], [29, 30, '', true]],
    [...arrange('keysLong', 'keysVerse', 'keysA', 'keysB', 'keysFill'), [29, 31, 'keysB']],
    arrange('bassLong', 'bassVerse', 'bassA', 'bassB', 'bassFill'),
    [[2, 6, 'fills'], [6, 10, 'fills'], [10, 12, 'fillsEnd', true], [49, 53, 'fills'], [53, 57, 'fills'], [57, 59, 'fillsEnd', true]]
];

const laneTop = i => i * LANE - 33;
const laneEnds = [1, 2, 3, 4, 5, 6, 7].map(i => laneTop(i) - 1).concat(laneTop(7) + 19);

byId('lanes').innerHTML =
    `<div class="cycle-area" style="${cycle}"></div>` +
    laneEnds.map(y => `<div class="lane-line" style="top:${y}px"></div>`).join('') +
    marks.map(bar => `<div class="bar-line" style="left:${barX(bar)}px"></div>`).join('') +
    clips.map((row, i) => row.map(([from, to, kind, unnamed]) => {
        const width = barX(to) - barX(from);
        const label = unnamed || i === 0 ? '' : `<span>${tracks[i].name}</span>`;
        return `<div class="clip" style="left:${barX(from) + 1}px;top:${laneTop(i) + 2}px;width:${width - 1}px"><svg>${drawNotes(kind, width)}</svg>${label}</div>`;
    }).join('')).join('');

// overview
byId('overview-map').innerHTML = clips.map((row, i) => row.map(([from, to]) => {
    const x = Math.round(4 + (from - 2) * 4.4);
    const w = Math.round((to - from) * 4.4);
    return `<rect x="${x}" y="${i * 4}" width="${w}" height="4" fill="#d3d4d5"/><rect x="${x + 1}" y="${i * 4 + 1}" width="${Math.max(w - 2, 1)}" height="2" fill="#a2a3a5"/>`;
}).join('')).join('');

// mixer
const channels = [
    { name: 'Stereo In', no: 1, vol: '0.00', peak: '-oo', knob: 11, meter: [0, 0], type: 'input' },
    { name: 'HALion Sonic 01', no: 1, vol: '3.71', peak: '6.1', knob: 3, meter: [57, 57], inserts: ['Compressor', 'Maximizer', 'RoomWor...SE'], small: true },
    { name: 'Pop Kit 3', no: 2, vol: '1.75', peak: '-2.3', knob: 7, meter: [21, 20] },
    { name: 'AGML2 01', no: 3, vol: '6.02', peak: '2.1', knob: -1, meter: [56, 57], inserts: ['Compressor'] },
    { name: 'ABPL2 01', no: 4, vol: '0.00', peak: '-3.5', knob: 11, meter: [20, 20] },
    { name: 'ABPL2 01 (D)', no: 5, vol: '-0.38', peak: '4.2', knob: 12, meter: [0, 0], pan: 'L69' },
    { name: 'Piapro Studio\nVSTi 01', no: 6, vol: '6.02', peak: '6.5', knob: -1, meter: [52, 53], inserts: ['Compressor', 'Maximizer', 'RoomWor...SE'], small: true },
    { selected: true, rackOnly: true },
    { rackOnly: true },
    { name: 'Stereo Out', no: 1, vol: '-9.79', peak: '1.6', knob: 30, meter: [50, 51], type: 'output' }
];

const ticks = [9, 23, 34, 42, 49, 54, 61, 71];
const scale = '<svg><path d="M5.500 3v75" stroke="#000" stroke-width="2"/>' +
    ticks.map(y => `<path d="M9 ${y}.5h17"/>`).join('') +
    [[11, '6'], [24, '0'], [36, '5'], [72, '00']].map(([y, t]) => `<text x="36" y="${y}">${t}</text>`).join('') + '</svg>';

const channelClass = c => `${c.type ? c.type + '-channel' : ''} ${c.selected ? 'selected' : ''}`;

byId('racks').innerHTML = channels.map(c => {
    const inserts = c.inserts || [];
    return `<div class="rack ${channelClass(c)}">
        <div class="rack-head ${inserts.length ? 'used' : ''}"><span>Inserts</span><i></i></div>
        ${[0, 1, 2].map(i => `<button class="slot ${inserts[i] ? 'used' : ''}" aria-label="インサート ${i + 1}">${inserts[i] || ''}</button>`).join('')}
    </div>`;
}).join('');

byId('strips').innerHTML = channels.map(c => {
    if (c.rackOnly) return `<div class="strip ${channelClass(c)}"></div>`;
    const bus = Boolean(c.type);
    return `<div class="strip ${channelClass(c)}">
        <div class="cells"><button>M</button><button>${c.type === 'input' ? '' : 'S'}</button><button></button><button aria-label="編集">${icon('edit')}</button></div>
        <div class="pan ${c.pan ? 'left' : ''}">${c.pan || 'C'}</div>
        <div class="fader-row">
            <div class="fader">${scale}<i class="knob ${bus ? 'red' : ''}" style="top:${c.knob}px"></i></div>
            <div class="meter">${c.meter.map(h => `<i style="height:${h}px"></i>`).join('')}</div>
        </div>
        <div class="values"><span>${c.vol}</span><span>${c.peak}</span></div>
        <div class="cells"><button>R</button><button>W</button><button>${bus ? '' : icon('dot')}</button><button>${bus ? '' : icon('speaker')}</button></div>
        <div class="channel-line ${bus ? '' : 'lit'}"></div>
        <div class="channel-info">${icon(c.type || 'piano')}${icon('link')}<span>${c.no}</span></div>
        <div class="channel-name ${c.small ? 'small' : ''}">${c.name}</div>
    </div>`;
}).join('');

// the strip area right of the selected channel stays empty
byId('strips').querySelectorAll('.strip')[8].style.visibility = 'hidden';

const effects = ['CPI', 'D16 Group', 'Delay', 'Distortion', 'Dynamics', 'EQ', 'Filter', 'Mastering', 'Modulation', 'Network', 'Other', 'Pitch Shift', 'Reverb', 'Spatial + Panner', 'Tools'];
byId('effects').innerHTML = effects.map(name => `<li>${name}</li>`).join('');
```
